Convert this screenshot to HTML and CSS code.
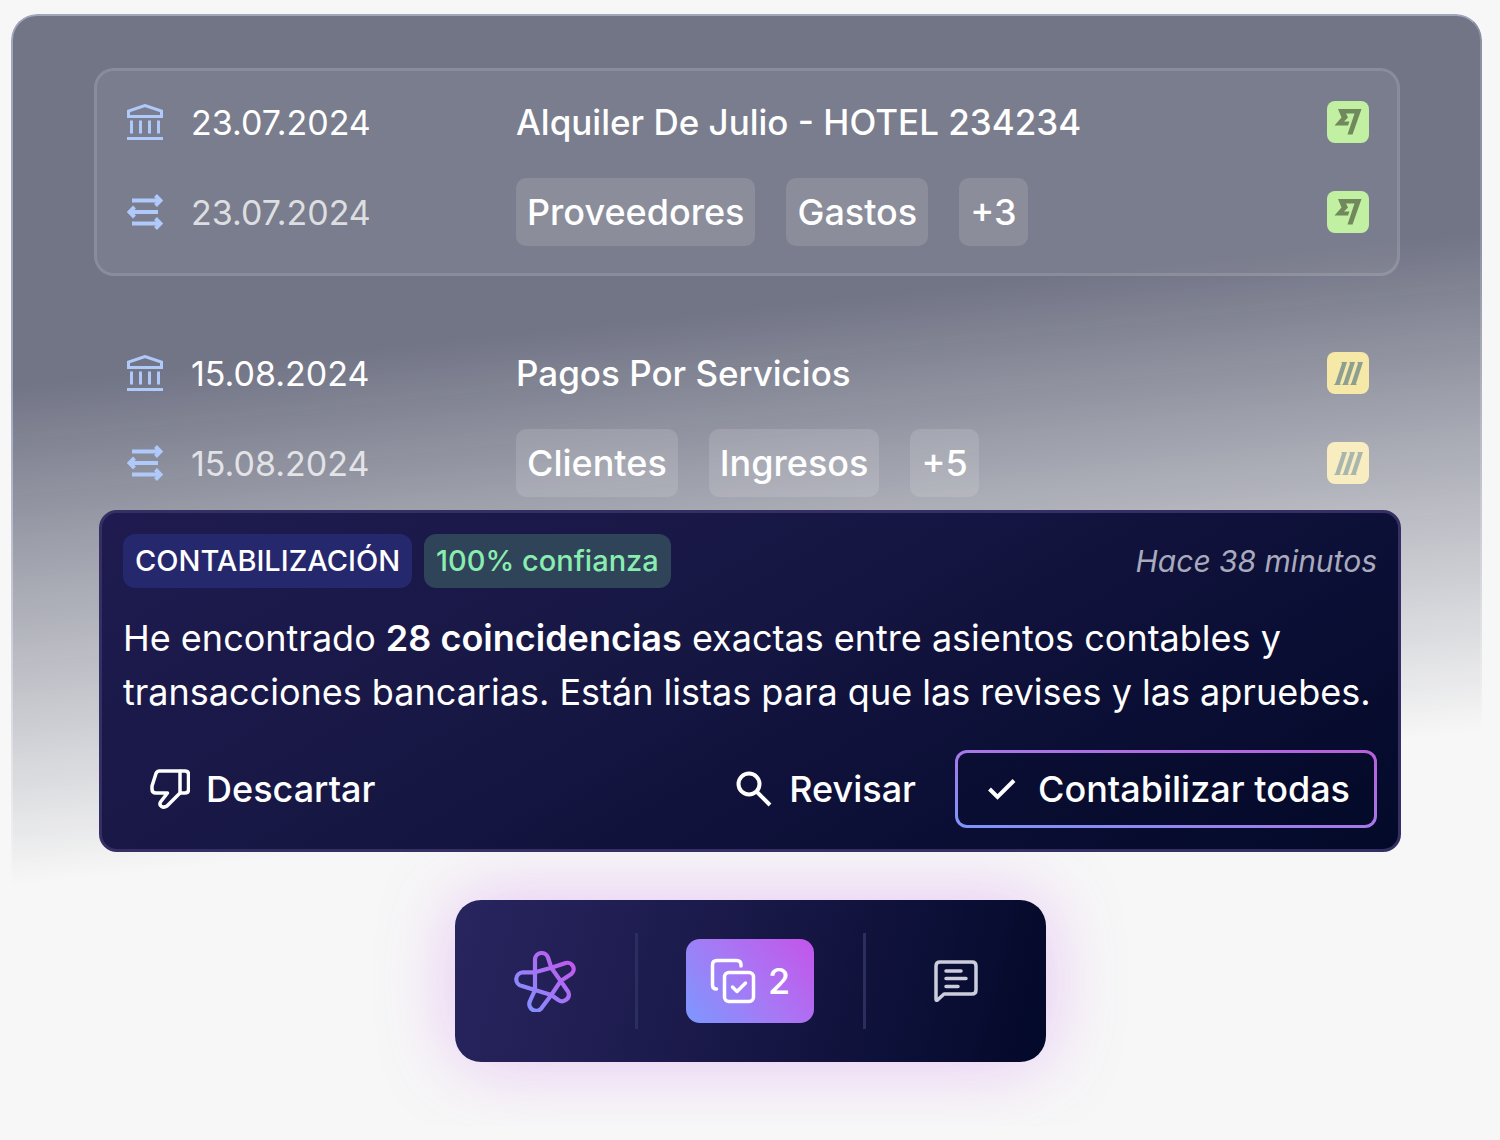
FILE: index.html
```
<!DOCTYPE html>
<html lang="es">
<head>
    <meta charset="UTF-8">
    <meta name="viewport" content="width=device-width, initial-scale=1.0">
    <link rel="stylesheet" href="styles.css">
    <title>Contabilización</title>
</head>
<body>

    <!-- Shared icons -->
    <svg class="sprite" aria-hidden="true">
        <symbol id="icon-bank" viewBox="0 0 36 36">
            <path d="M1.5 12.5V7L18 1.5 34.500 7v5.500z" fill="none" stroke="currentColor" stroke-width="3"/>
            <path d="M4.500 16.500v13M13.500 16.500v13M22.500 16.500v13M31.500 16.500v13" stroke="currentColor" stroke-width="3"/>
            <path d="M0 34.500h36" stroke="currentColor" stroke-width="3"/>
        </symbol>
        <symbol id="icon-transfer" viewBox="0 0 36 36">
            <path d="M5 6.500h26M31 18H5M5 29.500h26" fill="none" stroke="currentColor" stroke-width="4"/>
            <path d="M28.500 1.500l5 5-5 5M7.500 13l-5 5 5 5M28.500 24.500l5 5-5 5" fill="none" stroke="currentColor" stroke-width="4"/>
        </symbol>
        <symbol id="logo-wise" viewBox="0 0 42 42">
            <rect width="42" height="42" rx="8" fill="#c1f0a2"/>
            <path d="M11 8h23.500L25.500 33.500h-5L27.500 12.500h-8.500l2 4-4 4h5.500L21 24.500H7.500l7-8z" fill="#70885c"/>
        </symbol>
        <symbol id="logo-stripes" viewBox="0 0 42 42">
            <rect class="stripes-bg" width="42" height="42" rx="8"/>
            <path fill="currentColor" d="M14 10h6L13 31.500q0 1 1 1.500H6.500q1.500-.5 2-2L15 11.500q0-1-1-1.500zM22 10h6L21 31.500q0 1 1 1.500h-7.500q1.500-.5 2-2L23 11.500q0-1-1-1.500zM30 10h6L29 31.500q0 1 1 1.500h-7.500q1.500-.5 2-2L31 11.500q0-1-1-1.500z"/>
        </symbol>
    </svg>

    <main>
        <section class="panel">
            <ul class="match match-selected">
                <li class="row">
                    <svg class="row-icon"><use href="#icon-bank"/></svg>
                    <time datetime="2024-07-23">23.07.2024</time>
                    <span class="concept">Alquiler De Julio - HOTEL 234234</span>
                    <svg class="row-logo"><use href="#logo-wise"/></svg>
                </li>
                <li class="row row-entry">
                    <svg class="row-icon"><use href="#icon-transfer"/></svg>
                    <time datetime="2024-07-23">23.07.2024</time>
                    <div class="chips">
                        <span class="chip">Proveedores</span>
                        <span class="chip">Gastos</span>
                        <span class="chip">+3</span>
                    </div>
                    <svg class="row-logo"><use href="#logo-wise"/></svg>
                </li>
            </ul>
            <ul class="match">
                <li class="row">
                    <svg class="row-icon"><use href="#icon-bank"/></svg>
                    <time datetime="2024-08-15">15.08.2024</time>
                    <span class="concept">Pagos Por Servicios</span>
                    <svg class="row-logo"><use href="#logo-stripes"/></svg>
                </li>
                <li class="row row-entry">
                    <svg class="row-icon"><use href="#icon-transfer"/></svg>
                    <time datetime="2024-08-15">15.08.2024</time>
                    <div class="chips">
                        <span class="chip">Clientes</span>
                        <span class="chip">Ingresos</span>
                        <span class="chip">+5</span>
                    </div>
                    <svg class="row-logo faded"><use href="#logo-stripes"/></svg>
                </li>
            </ul>
        </section>

        <article class="card">
            <header class="card-header">
                <span class="tag">CONTABILIZACIÓN</span>
                <span class="tag tag-green">100% confianza</span>
                <span class="ago">Hace 38 minutos</span>
            </header>
            <p class="message">He encontrado <strong>28 coincidencias</strong> exactas entre asientos contables y transacciones bancarias. Están listas para que las revises y las apruebes.</p>
            <div class="actions">
                <button class="button button-discard">
                    <svg viewBox="0 0 40 40" fill="none" stroke="currentColor" stroke-width="3.500" stroke-linejoin="round">
                        <path d="M30 2H9.500Q7 2 6 4.500L2 17v3q0 4 4 4h11.500L10.500 33Q9 36 11.500 37.500t5.500-.5L30 24z"/>
                        <path d="M30 2h5q3.500 0 3.500 3.500v15Q38.500 24 35 24h-5"/>
                    </svg>
                    Descartar
                </button>
                <button class="button">
                    <svg viewBox="0 0 40 40" fill="none" stroke="currentColor" stroke-width="4">
                        <circle cx="16" cy="15" r="10.500"/>
                        <path d="M23.500 22.500L37 36"/>
                    </svg>
                    Revisar
                </button>
                <button class="button button-main">
                    <svg viewBox="0 0 40 40" fill="none" stroke="currentColor" stroke-width="4">
                        <path d="M7.500 20l8 8L32 11.500"/>
                    </svg>
                    Contabilizar todas
                </button>
            </div>
        </article>

        <nav class="dock">
            <button class="dock-item" aria-label="Asistente">
                <svg class="icon-star" viewBox="0 0 62 62" fill="none" stroke="url(#starGradient)" stroke-width="4.200" stroke-linejoin="round">
                    <defs>
                        <linearGradient id="starGradient" gradientUnits="userSpaceOnUse" x1="8" y1="52" x2="54" y2="10">
                            <stop offset="0" stop-color="#8490ff"/>
                            <stop offset="1" stop-color="#c159ee"/>
                        </linearGradient>
                    </defs>
                    <path d="M21 40V9A6.700 6.700 0 0 1 34 7.500L37.300 17.700L46.700 31L54.300 42A6.700 6.700 0 0 1 44.300 50L37.300 45L21 40L8 36A6.900 6.900 0 0 1 9 22.300L21 22.300L37.300 17.700L51.700 13A6.300 6.300 0 0 1 57.300 24L46.700 31L37.300 45L28.300 57A6.800 6.800 0 0 1 16 51z"/>
                </svg>
            </button>
            <button class="dock-item dock-center" aria-label="Tareas pendientes">
                <span class="pill">
                    <svg viewBox="0 0 46 46" fill="none" stroke="currentColor" stroke-width="3.500" stroke-linecap="round" stroke-linejoin="round">
                        <path d="M31 8V7Q31 2.500 26.500 2.500H7Q2.500 2.500 2.500 7v20Q2.500 31 6.500 31"/>
                        <rect x="14.500" y="14.500" width="29" height="29" rx="4.500"/>
                        <path d="M22.500 29l4.500 4.500 8.500-8.500"/>
                    </svg>
                    2
                </span>
            </button>
            <button class="dock-item" aria-label="Chat">
                <svg class="icon-chat" viewBox="0 0 46 46" fill="none" stroke="currentColor" stroke-width="3.500" stroke-linecap="round" stroke-linejoin="round">
                    <path d="M7 4H39Q43 4 43 8V32Q43 36 39 36H11L4.500 42Q3 43 3 41V8Q3 4 7 4z"/>
                    <path d="M13 13H28M13 20.500H33M13 28.500H25"/>
                </svg>
            </button>
        </nav>
    </main>
</body>
</html>
```

FILE: styles.css
```
* {
    margin: 0;
    padding: 0;
    box-sizing: border-box;
}

body {
    font-family: 'Inter', sans-serif;
    font-size: 36px;
    color: #fff;
    background-color: #f7f7f7;
}

main {
    display: flex;
    flex-direction: column;
    padding: 14px 0 64px;
}

.sprite {
    display: none;
}

/* Transactions panel */
.panel {
    position: relative;
    margin: 0 18px 0 11px;
    padding: 54px 82px 0 83px;
}

/* Background that fades out behind the card */
.panel::before {
    content: "";
    position: absolute;
    top: 0;
    right: 0;
    bottom: -400px;
    left: 0;
    border: 2px solid #a2a6bc;
    border-right-color: #8d90a1;
    border-bottom: none;
    border-radius: 26px 26px 0 0;
    background-color: #727586;
    mask-image: linear-gradient(174deg, #000 36%, transparent 84%);
}

.match {
    position: relative;
    display: flex;
    flex-direction: column;
    gap: 26px;
    list-style: none;
    padding: 24px 31px 0 33px;
    margin-top: 43px;
}

.match-selected {
    margin-top: 0;
    padding: 21px 28px 27px 30px;
    border: 3px solid rgba(255, 255, 255, 0.17);
    border-radius: 20px;
    background-color: rgba(255, 255, 255, 0.06);
    background-clip: padding-box;
}

.row {
    display: grid;
    grid-template-columns: 36px 297px 1fr 42px;
    align-items: center;
    column-gap: 28px;
    min-height: 60px;
}

.row-icon {
    width: 36px;
    height: 36px;
    color: #b0c9fb;
}

.row-logo {
    width: 42px;
    height: 42px;
    color: #8d9f93;
    fill: #f6e8a7;
}

.row-logo.faded {
    color: #a9b6ae;
    fill: #f8edc0;
}

.concept {
    font-size: 35px;
    font-weight: 500;
}

.row time {
    font-size: 34px;
}

.row-entry time {
    color: rgba(255, 255, 255, 0.75);
}

.chips {
    display: flex;
    gap: 31px;
}

.chip {
    padding: 0 11px;
    border-radius: 10px;
    line-height: 68px;
    font-weight: 500;
    background-color: rgba(255, 255, 255, 0.13);
}

/* Suggestion card */
.card {
    position: relative;
    z-index: 1;
    margin: 13px 99px 0;
    padding: 21px;
    border: 3px solid #352f63;
    border-radius: 18px;
    background: linear-gradient(150deg, #1f1b50 0%, #171744 40%, #0c0f36 70%, #030a29 100%);
}

.card-header {
    display: flex;
    align-items: center;
    gap: 12px;
}

.tag {
    padding: 0 12px;
    border-radius: 12px;
    font-size: 29px;
    line-height: 54px;
    font-weight: 500;
    background-color: #25286d;
}

.tag-green {
    color: #89edb0;
    background-color: #2f4359;
}

.ago {
    margin-left: auto;
    font-size: 30px;
    font-style: italic;
    color: #a9aabd;
}

.message {
    margin: 23px 0 31px;
    line-height: 54px;
}

.message strong {
    font-weight: 600;
}

.actions {
    display: flex;
    gap: 12px;
}

button {
    border: none;
    background: none;
    color: inherit;
    font: inherit;
    cursor: pointer;
}

.button {
    display: flex;
    align-items: center;
    gap: 16px;
    height: 78px;
    padding: 0 24px;
    border: 3px solid transparent;
    border-radius: 12px;
    font-weight: 500;
}

.button svg {
    width: 40px;
    height: 40px;
}

.button-discard {
    margin-right: auto;
}

.button-main {
    background: linear-gradient(150deg, #0b0e33, #040a2a) padding-box,
                linear-gradient(to top right, #7d96fb, #a678e6 50%, #b85fdc) border-box;
}

/* Bottom dock */
.dock {
    display: flex;
    align-self: center;
    margin-top: 48px;
    padding: 33px 0;
    border-radius: 26px;
    background: linear-gradient(105deg, #28255f 0%, #1b1a4b 42%, #0d1038 75%, #030929 100%);
    box-shadow: 0 0 75px rgba(196, 94, 240, 0.34);
}

.dock-item {
    display: flex;
    align-items: center;
    justify-content: center;
    width: 180px;
    height: 96px;
}

.dock-center {
    width: 231px;
    border-left: 3px solid #2b2f60;
    border-right: 3px solid #2b2f60;
}

.pill {
    display: flex;
    align-items: center;
    gap: 12px;
    height: 84px;
    padding: 0 24px;
    border-radius: 14px;
    font-weight: 500;
    background: linear-gradient(50deg, #7c98ff 0%, #a877f4 50%, #c355ea 100%);
}

.pill svg,
.icon-chat {
    width: 46px;
    height: 46px;
}

.icon-chat {
    color: #cbcddd;
}

.icon-star {
    width: 62px;
    height: 62px;
}
```
